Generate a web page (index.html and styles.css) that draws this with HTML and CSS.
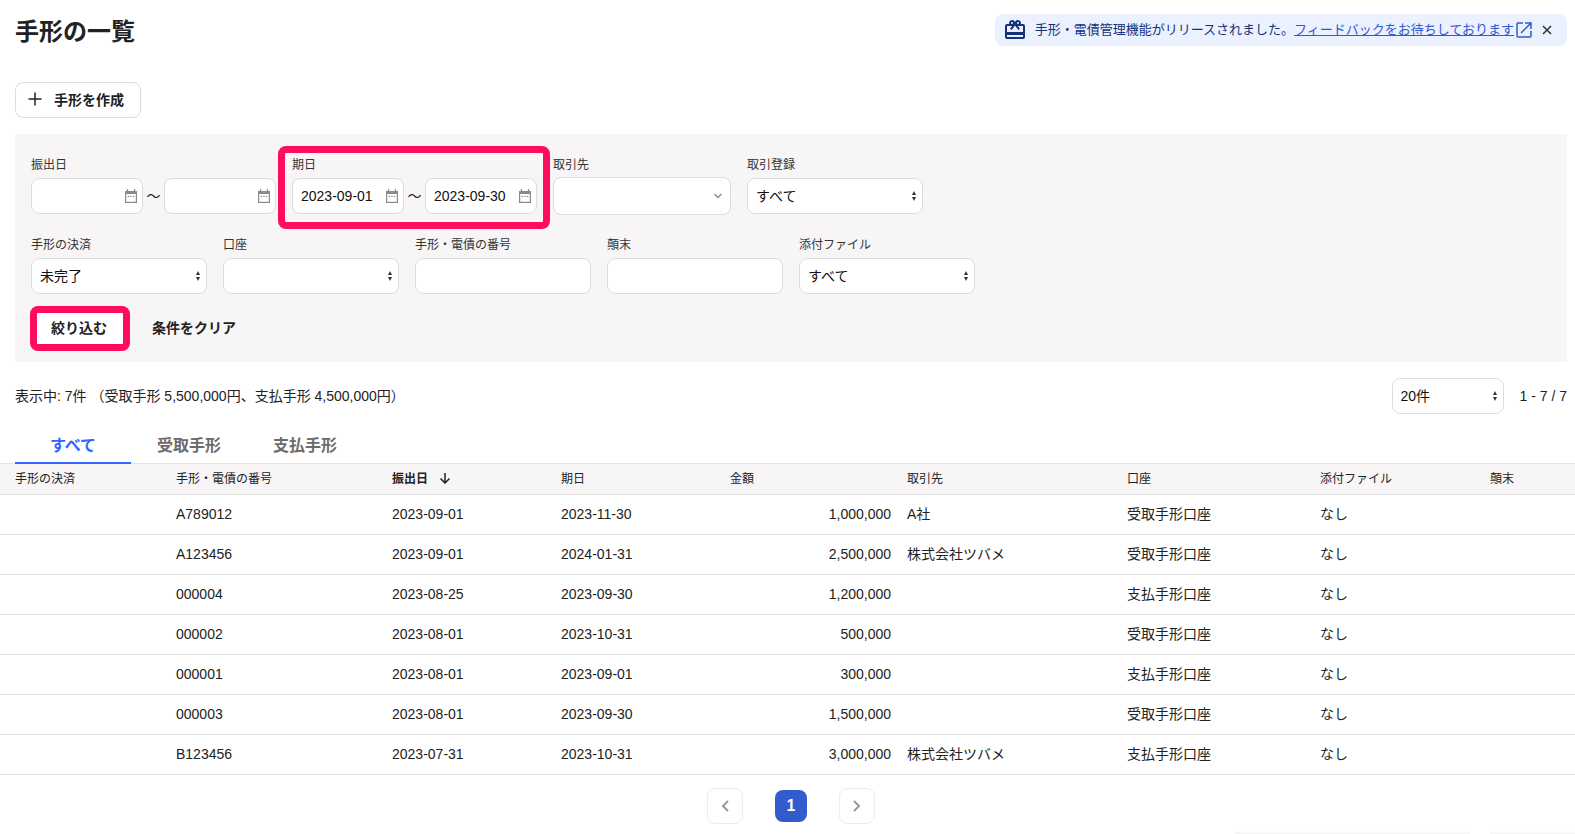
FILE: index.html
```html
<!DOCTYPE html>
<html lang="ja">
<head>
    <meta charset="UTF-8">
    <meta name="viewport" content="width=device-width, initial-scale=1.0">
    <title>手形の一覧</title>
    <link rel="stylesheet" href="styles.css">
</head>
<body>
    <header class="page-header">
        <h1>手形の一覧</h1>
        <div class="notice">
            <svg class="notice-icon" viewBox="0 0 24 24" width="24" height="24" fill="currentColor"><path d="M20 6h-2.18c.11-.31.18-.65.18-1a3 3 0 0 0-5.5-1.65l-.5.67-.5-.68A3 3 0 0 0 6 5c0 .35.07.69.18 1H4a2 2 0 0 0-2 2v11a2 2 0 0 0 2 2h16a2 2 0 0 0 2-2V8a2 2 0 0 0-2-2zm-5-2a1 1 0 1 1 0 2 1 1 0 0 1 0-2zM9 4a1 1 0 1 1 0 2 1 1 0 0 1 0-2zm11 15H4v-2h16v2zm0-5H4V8h5.080L7 10.830 8.620 12 12 7.400 15.380 12 17 10.830 14.920 8H20v6z"/></svg>
            <span>手形・電債管理機能がリリースされました。</span>
            <a class="notice-link" href="#">フィードバックをお待ちしております</a>
            <svg class="notice-external" viewBox="0 0 16 16" width="16" height="16" fill="none" stroke="currentColor" stroke-width="1.500"><path d="M7 1H2a1 1 0 0 0-1 1v12a1 1 0 0 0 1 1h12a1 1 0 0 0 1-1V9M9 1h6v6M15 1L5 11"/></svg>
            <button class="notice-close" type="button" aria-label="閉じる">
                <svg viewBox="0 0 10 10" width="10" height="10" fill="none" stroke="currentColor" stroke-width="1.500"><path d="M1 1l8 8M9 1L1 9"/></svg>
            </button>
        </div>
    </header>

    <main>
        <div class="actions">
            <button class="button" type="button">
                <svg viewBox="0 0 14 14" width="14" height="14" fill="none" stroke="currentColor" stroke-width="1.500"><path d="M7 .5v13M.5 7h13"/></svg>
                <span>手形を作成</span>
            </button>
        </div>

        <form class="filter">
            <div class="filter-row">
                <div class="field">
                    <label for="issue-from">振出日</label>
                    <div class="range">
                        <div class="date">
                            <input type="text" id="issue-from">
                            <svg viewBox="0 0 12 14" width="12" height="14" fill="none" stroke="#8c8989"><path d="M.6 2.500h10.800v10.900H.6z" stroke-width="1.200"/><path d="M.5 3.500h11" stroke-width="3"/><path d="M2.500 0v3M9.500 0v3" stroke-width="1.200"/><path d="M2.500 7.500h7" stroke-dasharray="1.600 1.100"/></svg>
                        </div>
                        <span class="tilde">～</span>
                        <div class="date">
                            <input type="text" aria-label="振出日 終了">
                            <svg viewBox="0 0 12 14" width="12" height="14" fill="none" stroke="#8c8989"><path d="M.6 2.500h10.800v10.900H.6z" stroke-width="1.200"/><path d="M.5 3.500h11" stroke-width="3"/><path d="M2.500 0v3M9.500 0v3" stroke-width="1.200"/><path d="M2.500 7.500h7" stroke-dasharray="1.600 1.100"/></svg>
                        </div>
                    </div>
                </div>
                <div class="field marked">
                    <label for="due-from">期日</label>
                    <div class="range">
                        <div class="date">
                            <input type="text" id="due-from" value="2023-09-01">
                            <svg viewBox="0 0 12 14" width="12" height="14" fill="none" stroke="#8c8989"><path d="M.6 2.500h10.800v10.900H.6z" stroke-width="1.200"/><path d="M.5 3.500h11" stroke-width="3"/><path d="M2.500 0v3M9.500 0v3" stroke-width="1.200"/><path d="M2.500 7.500h7" stroke-dasharray="1.600 1.100"/></svg>
                        </div>
                        <span class="tilde">～</span>
                        <div class="date">
                            <input type="text" aria-label="期日 終了" value="2023-09-30">
                            <svg viewBox="0 0 12 14" width="12" height="14" fill="none" stroke="#8c8989"><path d="M.6 2.500h10.800v10.900H.6z" stroke-width="1.200"/><path d="M.5 3.500h11" stroke-width="3"/><path d="M2.500 0v3M9.500 0v3" stroke-width="1.200"/><path d="M2.500 7.500h7" stroke-dasharray="1.600 1.100"/></svg>
                        </div>
                    </div>
                    <span class="highlight highlight-field"></span>
                </div>
                <div class="field">
                    <label for="partner">取引先</label>
                    <select id="partner" class="combo"><option></option></select>
                </div>
                <div class="field">
                    <label for="deal">取引登録</label>
                    <select id="deal"><option>すべて</option></select>
                </div>
            </div>

            <div class="filter-row">
                <div class="field">
                    <label for="settlement">手形の決済</label>
                    <select id="settlement"><option>未完了</option></select>
                </div>
                <div class="field">
                    <label for="account">口座</label>
                    <select id="account"><option></option></select>
                </div>
                <div class="field">
                    <label for="number">手形・電債の番号</label>
                    <input type="text" id="number">
                </div>
                <div class="field">
                    <label for="outcome">顛末</label>
                    <input type="text" id="outcome">
                </div>
                <div class="field">
                    <label for="attachment">添付ファイル</label>
                    <select id="attachment"><option>すべて</option></select>
                </div>
            </div>

            <div class="filter-actions">
                <div class="marked">
                    <button class="button button-apply" type="button">絞り込む</button>
                    <span class="highlight highlight-button"></span>
                </div>
                <button class="button button-plain" type="button">条件をクリア</button>
            </div>
        </form>

        <div class="summary">
            <p>表示中: 7件 （受取手形 5,500,000円、支払手形 4,500,000円）</p>
            <div class="pager-info">
                <select class="per-page" aria-label="表示件数"><option>20件</option></select>
                <span>1 - 7 / 7</span>
            </div>
        </div>

        <div class="tabs" role="tablist">
            <button class="tab tab-active" type="button" role="tab" aria-selected="true">すべて</button>
            <button class="tab" type="button" role="tab">受取手形</button>
            <button class="tab" type="button" role="tab">支払手形</button>
        </div>

        <table class="bills">
            <colgroup>
                <col class="col-settlement">
                <col class="col-number">
                <col class="col-date">
                <col class="col-date">
                <col class="col-amount">
                <col class="col-partner">
                <col class="col-account">
                <col class="col-attachment">
                <col>
            </colgroup>
            <thead>
                <tr>
                    <th>手形の決済</th>
                    <th>手形・電債の番号</th>
                    <th class="sorted">振出日<svg viewBox="0 0 12 12" width="12" height="12" fill="none" stroke="currentColor" stroke-width="1.500"><path d="M6 1v10M1.500 6.500L6 11l4.500-4.500"/></svg></th>
                    <th>期日</th>
                    <th>金額</th>
                    <th>取引先</th>
                    <th>口座</th>
                    <th>添付ファイル</th>
                    <th>顛末</th>
                </tr>
            </thead>
            <tbody>
                <tr><td></td><td>A789012</td><td>2023-09-01</td><td>2023-11-30</td><td class="amount">1,000,000</td><td>A社</td><td>受取手形口座</td><td>なし</td><td></td></tr>
                <tr><td></td><td>A123456</td><td>2023-09-01</td><td>2024-01-31</td><td class="amount">2,500,000</td><td>株式会社ツバメ</td><td>受取手形口座</td><td>なし</td><td></td></tr>
                <tr><td></td><td>000004</td><td>2023-08-25</td><td>2023-09-30</td><td class="amount">1,200,000</td><td></td><td>支払手形口座</td><td>なし</td><td></td></tr>
                <tr><td></td><td>000002</td><td>2023-08-01</td><td>2023-10-31</td><td class="amount">500,000</td><td></td><td>受取手形口座</td><td>なし</td><td></td></tr>
                <tr><td></td><td>000001</td><td>2023-08-01</td><td>2023-09-01</td><td class="amount">300,000</td><td></td><td>支払手形口座</td><td>なし</td><td></td></tr>
                <tr><td></td><td>000003</td><td>2023-08-01</td><td>2023-09-30</td><td class="amount">1,500,000</td><td></td><td>受取手形口座</td><td>なし</td><td></td></tr>
                <tr><td></td><td>B123456</td><td>2023-07-31</td><td>2023-10-31</td><td class="amount">3,000,000</td><td>株式会社ツバメ</td><td>支払手形口座</td><td>なし</td><td></td></tr>
            </tbody>
        </table>

        <nav class="pagination">
            <button class="page-move" type="button" aria-label="前へ">
                <svg viewBox="0 0 8 12" width="8" height="12" fill="none" stroke="currentColor" stroke-width="2"><path d="M7 1L2 6l5 5"/></svg>
            </button>
            <button class="page-current" type="button">1</button>
            <button class="page-move" type="button" aria-label="次へ">
                <svg viewBox="0 0 8 12" width="8" height="12" fill="none" stroke="currentColor" stroke-width="2"><path d="M1 1l5 5-5 5"/></svg>
            </button>
        </nav>
    </main>

    <!-- top edge of the help windows docked under the page -->
    <div class="dock">
        <div class="dock-item dock-wide"></div>
        <div class="dock-item"></div>
    </div>
</body>
</html>
```
FILE: styles.css
```css
* {
    box-sizing: border-box;
}

body {
    margin: 0;
    background-color: #fff;
    color: #222;
    font-family: "Liberation Sans", "Noto Sans CJK JP", sans-serif;
    font-size: 14px;
    line-height: 20px;
}

button,
input,
select {
    font-family: inherit;
    font-size: 14px;
    color: inherit;
}

button {
    cursor: pointer;
}

svg {
    display: block;
    flex-shrink: 0;
}

/* header */
.page-header {
    display: flex;
    justify-content: space-between;
    align-items: flex-start;
    padding: 14px 8px 0 15px;
}

h1 {
    margin: 0;
    font-size: 24px;
    line-height: 36px;
}

.notice {
    display: flex;
    align-items: center;
    height: 32px;
    padding: 0 8px;
    border-radius: 8px;
    background-color: #ebf1ff;
    color: #143278;
    font-size: 13px;
}

.notice-icon {
    margin-right: 8px;
}

.notice-link {
    color: #2f59cc;
}

.notice-external {
    margin-left: 2px;
    color: #2f59cc;
}

.notice-close {
    display: flex;
    padding: 8px;
    margin-left: 2px;
    margin-right: -1px;
    border: none;
    background: none;
    color: #323232;
}

/* buttons */
.actions {
    padding: 32px 8px 16px 15px;
}

.button {
    display: flex;
    align-items: center;
    gap: 12px;
    height: 36px;
    padding: 0 16px 2px 12px;
    border: 1px solid #dcdcdc;
    border-radius: 8px;
    background-color: #fff;
    font-weight: bold;
}

.button-apply {
    padding: 0 19px 2px;
}

.button-plain {
    padding: 0 16px 2px;
    border-color: transparent;
    background: none;
}

/* filter */
.filter {
    display: flex;
    flex-direction: column;
    gap: 20px;
    margin: 0 8px 16px 15px;
    padding: 20px 16px 16px;
    background-color: #f7f5f6;
}

.filter-row {
    display: flex;
    flex-wrap: wrap;
    gap: 16px;
}

.filter-actions {
    display: flex;
    gap: 8px;
    margin-top: -4px;
}

.field label {
    display: block;
    padding-top: 2px;
    margin-bottom: 4px;
    color: #323232;
    font-size: 12px;
    line-height: 18px;
}

input,
select {
    display: block;
    width: 176px;
    height: 36px;
    padding: 0 8px;
    border: 1px solid #dcdcdc;
    border-radius: 8px;
    background-color: #fff;
    color: #111;
}

select {
    appearance: none;
    background-image: url("data:image/svg+xml,%3Csvg xmlns='http://www.w3.org/2000/svg' width='4' height='10'%3E%3Cpath d='M0 4l2-4 2 4zM0 6l2 4 2-4z' fill='%23323232'/%3E%3C/svg%3E");
    background-repeat: no-repeat;
    background-position: right 6px center;
}

.combo {
    width: 178px;
    height: 38px;
    margin: -1px 0;
    background-image: url("data:image/svg+xml,%3Csvg xmlns='http://www.w3.org/2000/svg' width='8' height='6'%3E%3Cpath d='M.5 1L4 4.500 7.500 1' fill='none' stroke='%238c8989' stroke-width='1.500'/%3E%3C/svg%3E");
    background-position: right 8px center;
}

.range {
    display: flex;
    align-items: center;
}

.tilde {
    width: 21px;
    text-align: center;
}

.date {
    position: relative;
}

.date input {
    width: 112px;
}

.date svg {
    position: absolute;
    right: 6px;
    top: 11px;
}

/* callout frames */
.marked {
    position: relative;
}

.highlight {
    position: absolute;
    border: 7px solid #ff0c5c;
    border-radius: 8px;
    pointer-events: none;
}

.highlight-field {
    inset: -8px -13px -15px -14px;
}

.highlight-button {
    inset: -4px -3px -5px -1px;
}

/* summary */
.summary,
.pager-info {
    display: flex;
    align-items: center;
    justify-content: space-between;
    gap: 16px;
}

.summary {
    padding: 0 8px 0 15px;
}

.summary p {
    margin: 0;
}

.per-page {
    width: 112px;
}

/* tabs */
.tabs {
    position: relative;
    display: flex;
    margin: 14px 0 -1px;
    padding: 0 8px 0 15px;
}

.tab {
    min-width: 116px;
    height: 36px;
    padding: 0 16px 2px;
    border: none;
    border-bottom: 2px solid transparent;
    background: none;
    color: #6e6b6b;
    font-size: 16px;
    font-weight: bold;
}

.tab-active {
    border-bottom-color: #3366ff;
    color: #3366ff;
}

/* table */
.bills {
    width: 100%;
    table-layout: fixed;
    border-collapse: separate;
    border-spacing: 0;
}

.bills th,
.bills td {
    padding: 0 8px;
    border-bottom: 1px solid #e4e4e4;
    text-align: left;
    white-space: nowrap;
}

.bills th {
    height: 32px;
    border-top: 1px solid #e4e4e4;
    background-color: #f7f5f6;
    font-size: 12px;
    font-weight: normal;
}

.bills td {
    height: 40px;
    padding-bottom: 2px;
}

.bills th:first-child {
    padding-left: 15px;
}

.bills .sorted {
    font-weight: bold;
}

.sorted svg {
    display: inline-block;
    margin-left: 11px;
    vertical-align: -1px;
}

.bills .amount {
    text-align: right;
}

.col-settlement {
    width: 168px;
}

.col-number {
    width: 216px;
}

.col-date {
    width: 169px;
}

.col-amount {
    width: 177px;
}

.col-partner {
    width: 220px;
}

.col-account {
    width: 193px;
}

.col-attachment {
    width: 170px;
}

/* pagination */
.pagination {
    display: flex;
    justify-content: center;
    align-items: center;
    gap: 32px;
    padding: 13px 8px 0 15px;
}

.page-move,
.page-current {
    display: flex;
    justify-content: center;
    align-items: center;
    border-radius: 8px;
}

.page-move {
    width: 36px;
    height: 36px;
    border: 1px solid #ececec;
    background-color: #fff;
    color: #999;
}

.page-current {
    width: 32px;
    height: 32px;
    border: none;
    background-color: #325bcc;
    color: #fff;
    font-size: 16px;
    font-weight: bold;
}

.dock {
    position: fixed;
    right: 0;
    bottom: 0;
    display: flex;
    gap: 20px;
}

.dock-item {
    width: 85px;
    height: 1px;
    background-color: #f4f4f4;
    box-shadow: 0 0 3px rgba(0, 0, 0, 0.1);
}

.dock-wide {
    width: 235px;
}
```
